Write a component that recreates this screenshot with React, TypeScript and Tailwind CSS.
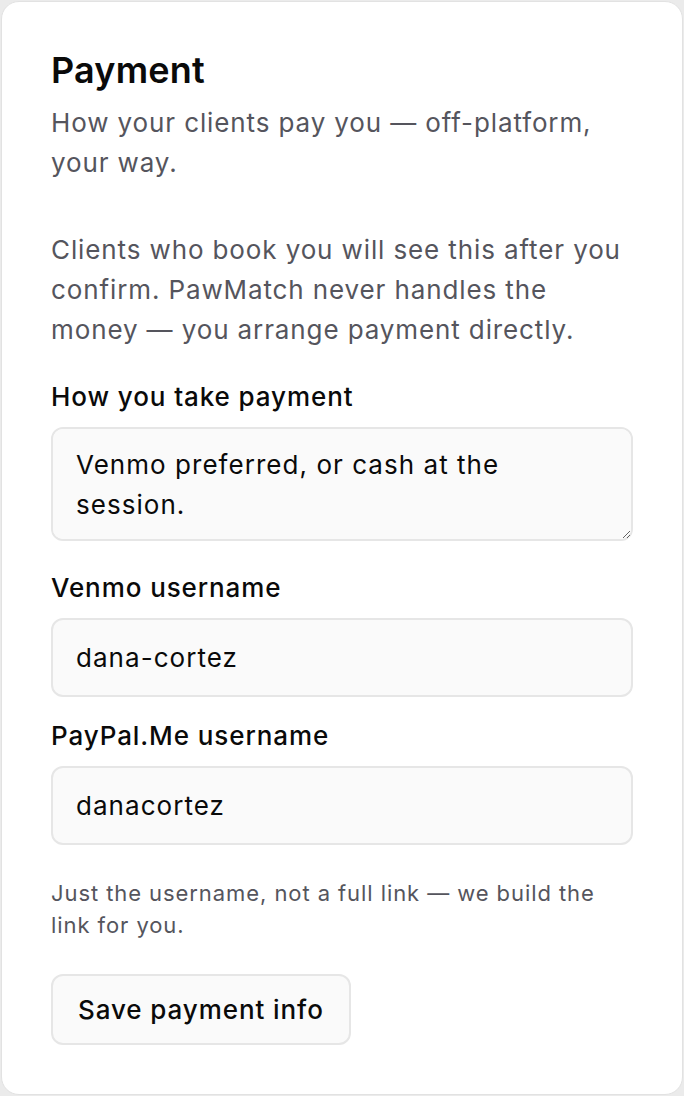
export default function App() {
  return (
    <div className="min-h-screen bg-[#ebebeb] p-px font-['Inter',sans-serif]">
      <div className="flex h-[1094px] flex-col rounded-[18px] border border-[#e2e2e2] bg-white px-[49px] pt-[48px]">
        {/* Header */}
        <h2 className="text-[36px] font-semibold leading-[40px] tracking-[0.005em] text-[#0a0a0a]">Payment</h2>
        <p className="mt-[13px] text-[26px] leading-[40px] tracking-[0.034em] text-[#55555d]">
          How your clients pay you — off-platform, your way.
        </p>

        <p className="mt-[47px] text-[26px] leading-[40px] tracking-[0.034em] text-[#55555d]">
          Clients who book you will see this after you confirm. PawMatch never handles the money — you arrange payment
          directly.
        </p>

        {/* Form */}
        <label className="mt-[29px] text-[26px] font-medium leading-[36px] tracking-[0.035em] text-[#0a0a0a]">
          How you take payment
        </label>
        <textarea
          className="mt-[12px] block h-[114px] w-full resize-y rounded-[12px] border-2 border-[#e6e6e6] bg-[#fafafa] px-[23px] py-[16px] text-[26px] leading-[40px] tracking-[0.04em] text-[#0a0a0a] outline-none"
          defaultValue="Venmo preferred, or cash at the session."
        />

        <label className="mt-[29px] text-[26px] font-medium leading-[36px] tracking-[0.035em] text-[#0a0a0a]">
          Venmo username
        </label>
        <input
          className="mt-[12px] block h-[79px] w-full rounded-[12px] border-2 border-[#e6e6e6] bg-[#fafafa] px-[23px] text-[26px] tracking-[0.04em] text-[#0a0a0a] outline-none"
          defaultValue="dana-cortez"
        />

        <label className="mt-[21px] text-[26px] font-medium leading-[36px] tracking-[0.035em] text-[#0a0a0a]">
          PayPal.Me username
        </label>
        <input
          className="mt-[12px] block h-[79px] w-full rounded-[12px] border-2 border-[#e6e6e6] bg-[#fafafa] px-[23px] text-[26px] tracking-[0.04em] text-[#0a0a0a] outline-none"
          defaultValue="danacortez"
        />

        <p className="mt-[32px] text-[22px] leading-[32px] tracking-[0.042em] text-[#55555d]">
          Just the username, not a full link — we build the link for you.
        </p>

        <div className="mt-[33px]">
          <button className="h-[71px] rounded-[12px] border-2 border-[#e6e6e6] bg-[#fafafa] px-[25px] text-[26px] font-medium tracking-[0.035em] text-[#0a0a0a]">
            Save payment info
          </button>
        </div>
      </div>
    </div>
  )
}
